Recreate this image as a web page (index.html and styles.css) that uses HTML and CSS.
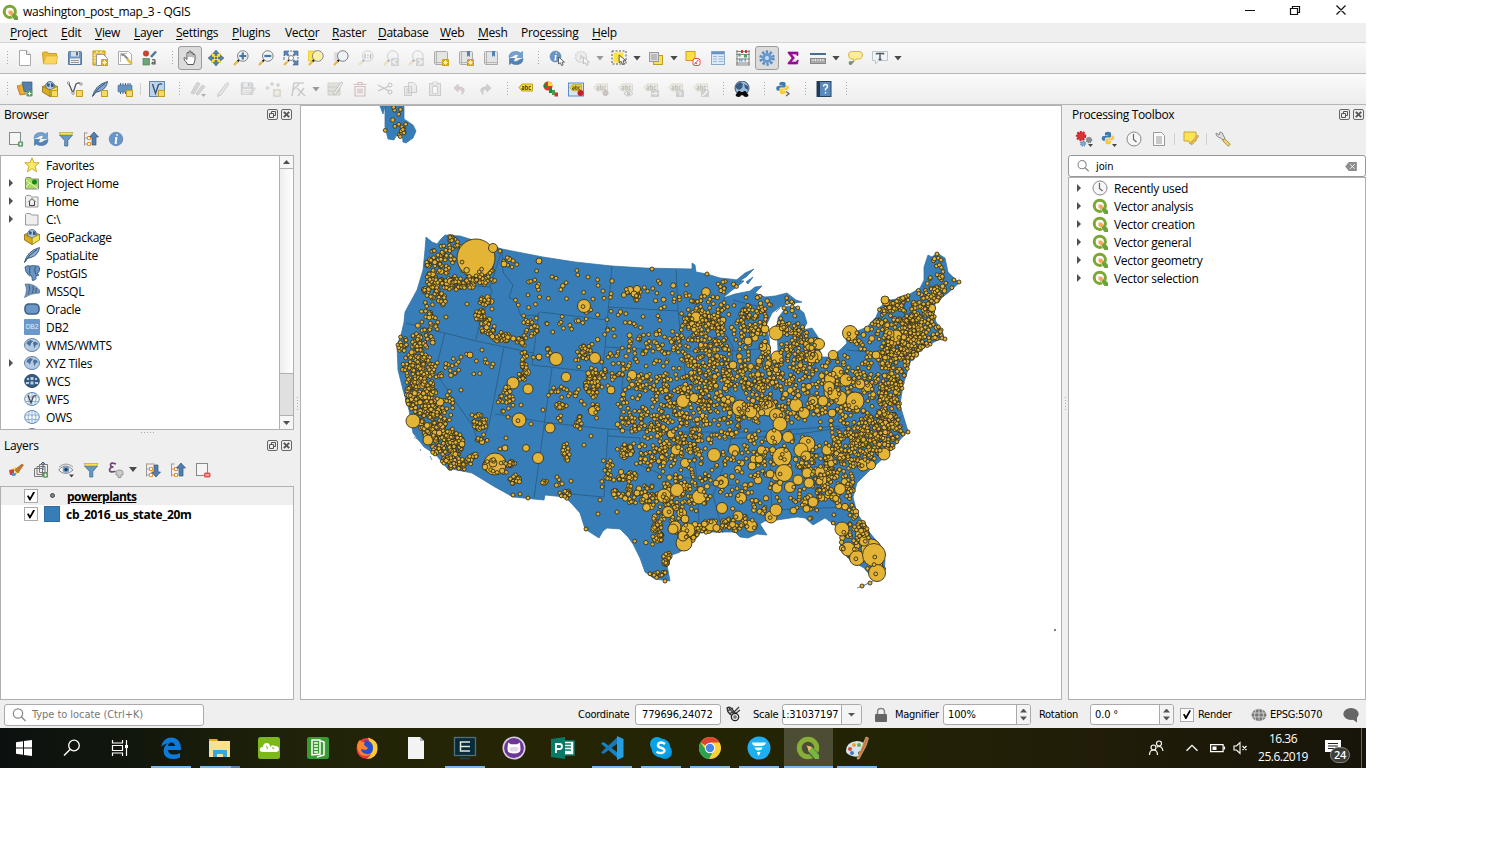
FILE: index.html
```html
<!DOCTYPE html>
<html lang="en">
<head>
<meta charset="utf-8">
<title>washington_post_map_3 - QGIS</title>
<link rel="stylesheet" href="styles.css">
</head>
<body>
<svg class="sprite" aria-hidden="true">
<symbol id="q" viewBox="0 0 16 16"><circle cx="7.8" cy="7.8" r="5.6" fill="none" stroke="#7aa832" stroke-width="3"/><path d="M8 8l6.500 6.500" stroke="#fff" stroke-width="4.500"/><path d="M10.500 9h2l3.500 3.800V16h-3.500L9.500 12z" fill="#6ba539"/><path d="M6.500 6.500h3l2.500 2.500-3 3-2.500-2.500z" fill="#f3a85c"/></symbol>
<symbol id="new" viewBox="0 0 16 16"><path d="M2.500.5h7l4 4v11h-11z" fill="#fff" stroke="#aaa"/><path d="M9.500.5v4h4" fill="#eee" stroke="#999"/></symbol>
<symbol id="open" viewBox="0 0 16 16"><path d="M.5 3l1-1h4l1 1.500h8v10H1.500z" fill="#e8b83a" stroke="#cf9e28"/><path d="M1.500 14L4 6h12l-2 8z" fill="#fbd65c" stroke="#dbab35" stroke-width=".6"/></symbol>
<symbol id="save" viewBox="0 0 16 16"><path d="M1.500 2.500q0-1 1-1h11q1 0 1 1v12h-13z" fill="#7197c2" stroke="#56789d"/><rect x="4" y="1.500" width="8" height="5" fill="#d8dde2"/><rect x="9" y="2" width="2" height="3.500" fill="#526b86"/><rect x="3" y="8.500" width="10" height="5.500" fill="#efefef"/><path d="M4 10.500h8M4 12.500h8" stroke="#999"/></symbol>
<symbol id="star" viewBox="0 0 8 8"><rect width="8" height="8" rx="1" fill="#cba516"/><path d="M4 1v6M1 4h6M2 2l4 4M6 2L2 6" stroke="#fff7a0"/></symbol>
<symbol id="layout" viewBox="0 0 16 16"><path d="M1 1h12v14H1z" fill="#f2c62e" stroke="#bd941c"/><path d="M4.500 4.500h7l4 4v7h-11z" fill="#fff" stroke="#999"/><path d="M1.500 5h2M1.500 8h2M1.500 11h2M5 1v2M9 1v2" stroke="#fff"/><use href="#star" x="9" y="9" width="7" height="7"/></symbol>
<symbol id="mgr" viewBox="0 0 16 16"><path d="M1.500 1.500h10l3 3v10h-13z" fill="#fff" stroke="#aaa"/><path d="M3.500 12V3.500H10" fill="none" stroke="#bbb"/><path d="M4.500 5.500q2-1.500 3.500.5t3 3" fill="none" stroke="#888" stroke-width="2"/><path d="M10 9l5 5" stroke="#e3bd3b" stroke-width="2.500"/></symbol>
<symbol id="style" viewBox="0 0 16 16"><circle cx="4" cy="3.500" r="3" fill="#c8442c"/><rect x="1" y="8.500" width="6.500" height="6.500" fill="#69a778" stroke="#44774f" stroke-width=".6"/><path d="M9 7l5-5.500" stroke="#4c76a5" stroke-width="2.500"/><path d="M10 10q3-1.200 3 1v3.500M13 12q-3 0-3 1.300t3 .2" stroke="#555" stroke-width="1.200" fill="none"/></symbol>
<symbol id="hand" viewBox="0 0 16 16"><path d="M5.500 14.500c0-2-3.500-4-3.500-6s2 0 3 1V3q1-1.500 2 0V1.500q1-1.500 2 0V3q1-1.500 2 0v1.500q1.500-1 2 .5v5l-1.500 4.500z" fill="#fff" stroke="#333" stroke-width=".8"/><path d="M7 3v4M9 2.500V7M11 3.500V7.500" stroke="#555" stroke-width=".8"/></symbol>
<symbol id="pan" viewBox="0 0 16 16"><path d="M3 3h10v10H3z" fill="#f6dc3a" opacity=".9"/><path d="M8 0l3 3.500H9v2H7v-2H5zM8 16l3-3.500H9v-2H7v2H5zM0 8l3.500-3v2h2v2h-2v2zM16 8l-3.500-3v2h-2v2h2v2z" fill="#5583b6" stroke="#305376" stroke-width=".5"/><circle cx="8" cy="8" r="1.200" fill="#476d97"/></symbol>
<symbol id="glass" viewBox="0 0 16 16"><circle cx="9.800" cy="6" r="5.300" fill="#eef3f7" stroke="#808080"/><path d="M6 10l-1.500 1.500" stroke="#222" stroke-width="2"/><path d="M4.500 11.500L1 15" stroke="#e3b940" stroke-width="2.300"/></symbol>
<symbol id="zin" viewBox="0 0 16 16"><use href="#glass"/><path d="M9.800 2.500v7M6.300 6h7" stroke="#4776ab" stroke-width="2.200"/></symbol>
<symbol id="zout" viewBox="0 0 16 16"><use href="#glass"/><path d="M6.300 6h7" stroke="#4776ab" stroke-width="2.200"/></symbol>
<symbol id="zfull" viewBox="0 0 16 16"><path d="M2 1h12v14H2z" fill="#f5f5f5"/><path d="M1 1h5L4.500 3 6 5 5 6 3 4.500 1 6zM15 1h-5l1.500 2L10 5l1 1 2-1.500L15 6zM15 15h-5l1.500-2L10 11l1-1 2 1.500 2-1.500z" fill="#5a87b8" stroke="#385b82" stroke-width=".6"/><path d="M7 1h2M1 7v3M15 7v2" stroke="#4776ab"/><circle cx="8" cy="8" r="2.500" fill="#fff" stroke="#888"/><path d="M6 10l-1 1" stroke="#222" stroke-width="2"/><path d="M4.500 11.500L1 15" stroke="#e3b940" stroke-width="2.300"/></symbol>
<symbol id="zsel" viewBox="0 0 16 16"><path d="M0 1h8v10H0z" fill="#f9e450" stroke="#d2b322" stroke-width=".6"/><use href="#glass"/><circle cx="9.800" cy="6" r="4.600" fill="#fbf1a5"/></symbol>
<symbol id="zlay" viewBox="0 0 16 16"><path d="M1 2h8v9H1z" fill="#ddd"/><use href="#glass"/></symbol>
<symbol id="z11" viewBox="0 0 16 16"><use href="#glass"/><path d="M7 4v4.500M12.500 4v4.500M9.800 4.800v1M9.800 7.200v1" stroke="#444" stroke-width="1.300"/></symbol>
<symbol id="zprev" viewBox="0 0 16 16"><use href="#glass"/><rect x="8" y="8" width="8" height="8" fill="#999"/><path d="M13.500 9.500L10 12l3.500 2.500" stroke="#fff" stroke-width="1.500" fill="none"/></symbol>
<symbol id="znext" viewBox="0 0 16 16"><use href="#glass"/><rect x="8" y="8" width="8" height="8" fill="#999"/><path d="M10.500 9.500L14 12l-3.500 2.500" stroke="#fff" stroke-width="1.500" fill="none"/></symbol>
<symbol id="book" viewBox="0 0 16 16"><path d="M1.500 2.500q0-1 1-1h11q1 0 1 1v12h-12l-1-1z" fill="#e4e4e4" stroke="#aaa"/><path d="M3.500 2v12M1.500 12.500h13" stroke="#b5b5b5"/></symbol>
<symbol id="map" viewBox="0 0 16 16"><use href="#book"/><use href="#star" x="9" y="9" width="7" height="7"/></symbol>
<symbol id="bkm" viewBox="0 0 16 16"><use href="#book"/><path d="M9 1h3v6l-1.500-1.500L9 7z" fill="#5280b3"/></symbol>
<symbol id="bkn" viewBox="0 0 16 16"><use href="#bkm"/><use href="#star" x="9" y="9" width="7" height="7"/></symbol>
<symbol id="ref" viewBox="0 0 16 16"><path d="M1 7.500Q1 1.500 8 1.500q3 0 4.500 1.500L14.500 1.500V7.500H9L11 5.200Q7.500 3 5 6z" fill="#72a1d2" stroke="#4f7dae" stroke-width=".6"/><path d="M15 8.500q0 6-7 6-3 0-4.500-1.500l-2 1.500V8.500H7L5 10.800Q8.500 13 11 10z" fill="#4f83ba" stroke="#3f6b9b" stroke-width=".6"/></symbol>
<symbol id="cur" viewBox="0 0 8 9"><path d="M1 0v7l1.800-1.300L4 8.500 5.500 8 4.500 5.200H7z" fill="#fff" stroke="#444" stroke-width=".8"/></symbol>
<symbol id="info" viewBox="0 0 16 16"><circle cx="8" cy="8" r="6.800" fill="#6795c7" stroke="#4f79a6" stroke-width=".6"/><path d="M8.300 3.800h1.400M7 7h1.500L7.500 12H9" fill="none" stroke="#fff" stroke-width="1.700"/></symbol>
<symbol id="ident" viewBox="0 0 16 16"><use href="#info" width="13" height="13"/><use href="#cur" x="8.500" y="7" width="8" height="9"/></symbol>
<symbol id="act" viewBox="0 0 16 16"><circle cx="7" cy="7" r="5.500" fill="#ddd" stroke="#999" stroke-width="1.600" stroke-dasharray="2 1"/><path d="M6 4.500L10 7l-4 2.500z" fill="#888"/><use href="#cur" x="8.500" y="7" width="8" height="9"/></symbol>
<symbol id="sel" viewBox="0 0 16 16"><rect x="2.500" y="2.500" width="10" height="10" fill="#f9e443"/><rect x="1" y="1" width="14" height="13" fill="none" stroke="#555" stroke-dasharray="2 1.500"/><use href="#cur" x="7" y="5" width="9" height="10"/></symbol>
<symbol id="selform" viewBox="0 0 16 16"><rect x="5.500" y="5.500" width="9" height="9" fill="#f9e443" stroke="#bd9d27"/><rect x="1.500" y="2.500" width="9" height="9" fill="#ddd" stroke="#999"/><path d="M3 5h6M3 7h6M3 9h6" stroke="#999"/></symbol>
<symbol id="desel" viewBox="0 0 16 16"><rect x="1" y="1.500" width="9" height="9" fill="#fbe13d" stroke="#d19927"/><rect x="8" y="8.500" width="7" height="7" rx="2" fill="#fff" stroke="#dc4a4a"/><path d="M9 14.500l5-5M10 12.500l2 1.500" stroke="#dc3a3a"/></symbol>
<symbol id="table" viewBox="0 0 16 16"><rect x="1.500" y="1.500" width="13" height="13" fill="#dfeaf5" stroke="#86a9cd"/><path d="M2 3h12" stroke="#6894c2" stroke-width="2.500"/><path d="M3 6.500h4M8.500 6.500h5M3 9h4M8.500 9h5M3 11.500h4M8.500 11.500h5" stroke="#9ab9d9"/></symbol>
<symbol id="abac" viewBox="0 0 16 16"><path d="M2 0v15M14 0v15M1 15h14M1 4.500h14M1 9h14M1 13h14M1 1.500h14" stroke="#888" stroke-width="1.100"/><path d="M6 1.500h2M10 1.500h2" stroke="#cf3434" stroke-width="3"/><path d="M3.500 5h2M9 6h3" stroke="#45a566" stroke-width="3"/><path d="M4 10h4M9.500 10h2" stroke="#6e9ac7" stroke-width="3" stroke-dasharray="1.500 .6"/></symbol>
<symbol id="gear" viewBox="0 0 16 16"><circle cx="8" cy="8" r="6.200" fill="none" stroke="#5a8bc2" stroke-width="3" stroke-dasharray="2.300 1.600"/><circle cx="8" cy="8" r="5" fill="#6798ce"/><circle cx="8" cy="8" r="2" fill="#c8dcf1"/></symbol>
<symbol id="sigma" viewBox="0 0 16 16"><path d="M3 2h10v3.500h-1L11 4H6.500l3 4-3.500 4h5l1.500-2h.8L12.500 14H3v-1l4-5-4-5z" fill="#970c97" stroke="#970c97" stroke-width=".7"/></symbol>
<symbol id="ruler" viewBox="0 0 16 16"><path d="M0 4h16" stroke="#4a6d93" stroke-width="2"/><rect x=".5" y="8.500" width="15" height="5" fill="#aaa" stroke="#888"/><path d="M3 9v2M5.500 9v2M8 9v2M10.500 9v2M13 9v2" stroke="#eee"/></symbol>
<symbol id="tip" viewBox="0 0 16 16"><path d="M4 1.500h9q2.500.5 2.500 3.500t-2.500 4H9L6.500 12V9H4Q1.500 8 1.500 5T4 1.500z" fill="#fbed91" stroke="#d6bb41"/><path d="M3.500 13.500l3-2" stroke="#888" stroke-width="2"/><circle cx="3.500" cy="13" r="1.900" fill="#6c9a60"/></symbol>
<symbol id="anno" viewBox="0 0 16 16"><path d="M.5 1.500h15v9H7L3.500 14v-3.500h-3z" fill="#eef4f9" stroke="#bbc5cd"/><path d="M4.500 3v1.500M4.500 3.500h7V4.500M8 3.500v6M6.500 9.500h3" fill="none" stroke="#555" stroke-width="1.400"/></symbol>
<symbol id="plus" viewBox="0 0 8 8"><rect x=".5" y=".5" width="7" height="7" rx="1.500" fill="#5d9a66"/><path d="M4 2v4M2 4h4" stroke="#fff" stroke-width="1.200"/></symbol>
<symbol id="yb" viewBox="0 0 8 8"><rect x=".5" y=".5" width="7" height="7" rx="1" fill="#f5db61" stroke="#c69c1d" stroke-width="1.300"/></symbol>
<symbol id="dsm" viewBox="0 0 16 16"><path d="M0 5l5-1 4 9-6 1z" fill="#f0a22e" stroke="#99591b" stroke-width=".6"/><path d="M3 3l7-1 2 9-7 1z" fill="#e3bb38"/><path d="M5 1h10v9.500H7z" fill="#557fac" stroke="#385d84" stroke-width=".7"/><use href="#plus" x="9" y="9" width="7" height="7"/></symbol>
<symbol id="box" viewBox="0 0 16 16"><path d="M.5 5.500L8 2l7.500 3.500v5.500L8 15.500.5 11z" fill="#dbac1e" stroke="#7b621b" stroke-width=".6"/><circle cx="8" cy="4.800" r="4.300" fill="#a9c5e0" stroke="#3b6088" stroke-width=".8"/><path d="M5 2l3 1-1 3-2-1zM9 2l2.500 1v3H9z" fill="#36597f"/><path d="M8 9l7.500-3.500V11L8 15.500z" fill="#f3e250" stroke="#7b621b" stroke-width=".5"/><path d="M8 9L.5 5.500V11L8 15.500z" fill="#dbac1e" stroke="#7b621b" stroke-width=".5"/></symbol>
<symbol id="gpk" viewBox="0 0 16 16"><use href="#box"/><use href="#yb" x="9" y="9" width="7" height="7"/></symbol>
<symbol id="vec" viewBox="0 0 16 16"><path d="M1.500 2L6 12 9 3q3-2 4-.5" fill="none" stroke="#4b5158" stroke-width="1.200"/><circle cx="1.500" cy="2" r="1.200" fill="#fff" stroke="#555" stroke-width=".6"/><circle cx="6" cy="12" r="1.300" fill="#fff" stroke="#555" stroke-width=".6"/><circle cx="14" cy="3" r="1.200" fill="#fff" stroke="#555" stroke-width=".6"/></symbol>
<symbol id="shp" viewBox="0 0 16 16"><use href="#vec"/><use href="#yb" x="9" y="9" width="7" height="7"/></symbol>
<symbol id="feather" viewBox="0 0 16 16"><path d="M.5 15.500Q3 4 15.500.5 14.500 8 7 10.500l-4 1z" fill="#85a9cf" stroke="#365578" stroke-width=".9"/><path d="M1 15Q5 7 13 2.500" stroke="#365578" fill="none"/></symbol>
<symbol id="spl" viewBox="0 0 16 16"><use href="#feather"/><use href="#yb" x="9" y="9" width="7" height="7"/></symbol>
<symbol id="mem" viewBox="0 0 16 16"><path d="M3.500 2v11M6 2v11M8.500 2v11M11 2v11M13 2v11" stroke="#456b93"/><rect x="1" y="4" width="14" height="7" rx="1" fill="#6692c0" stroke="#456b93" stroke-width=".6"/><use href="#yb" x="9" y="9" width="7" height="7"/></symbol>
<symbol id="virt" viewBox="0 0 16 16"><rect x=".5" y=".5" width="15" height="15" fill="#bdd3e9" stroke="#6488ad"/><path d="M3.500 3l3 9.500 3-9q3-1 3.500 0" fill="none" stroke="#34516f" stroke-width="1.300"/><use href="#yb" x="9" y="9" width="7" height="7"/></symbol>
<symbol id="pen" viewBox="0 0 16 16"><path d="M3 13L12 1.500l2 1.500L6 14l-3.500 1.500z" fill="#ccc" stroke="#777"/></symbol>
<symbol id="pens" viewBox="0 0 16 16"><path d="M1 12L7 1.500l3 1L4 13zM6 13l6-9 3 1.500-7 8.500z" fill="#999" stroke="#777"/><path d="M11 13h5l-2.500 3z" fill="#222"/></symbol>
<symbol id="savee" viewBox="0 0 16 16"><use href="#save" width="14" height="15"/><path d="M9 13l5-7 2 1-5 7z" fill="#999"/></symbol>
<symbol id="pts" viewBox="0 0 16 16"><g fill="#bbb" stroke="#777"><circle cx="2.500" cy="7" r="1.300"/><circle cx="7" cy="3" r="1.300"/><circle cx="13" cy="4" r="1.300"/></g><use href="#star" x="8" y="8" width="8" height="8"/></symbol>
<symbol id="vert" viewBox="0 0 16 16"><path d="M2 15L4 2h10M3 9L9 3M7 7l8 8M14 7l-6 8" stroke="#777" fill="none" stroke-width="1.500"/></symbol>
<symbol id="multi" viewBox="0 0 16 16"><path d="M1 2h12v12H1z" fill="#bba" stroke="#887"/><path d="M1 6h12M1 10h12" stroke="#776"/><path d="M6 13l8-12 2 1-8 12z" fill="#eee" stroke="#555"/></symbol>
<symbol id="trash" viewBox="0 0 16 16"><path d="M3 5.500h10v9.500H3zM1.500 3.500h13M6 3V1.500h4V3M6 7.500v5M8 7.500v5M10 7.500v5" fill="none" stroke="#964c4c" stroke-width="1.200"/></symbol>
<symbol id="cut" viewBox="0 0 16 16"><path d="M1 4l11 6M1 10l11-5" stroke="#666" stroke-width="1.300"/><circle cx="13" cy="4" r="2" fill="none" stroke="#555"/><circle cx="13" cy="11" r="2" fill="none" stroke="#555"/></symbol>
<symbol id="copy" viewBox="0 0 16 16"><path d="M6.500 1.500h5l3 3v7h-8zM2.500 5.500h7v9h-7zM4 8h4M4 10h4M4 12h4" fill="#ddd" stroke="#777"/></symbol>
<symbol id="paste" viewBox="0 0 16 16"><path d="M2.500 2.500h11v12h-11z" fill="#ccc" stroke="#777"/><path d="M5.500 5.500h5v7h-5zM6 1h4v3H6z" fill="#fff" stroke="#888"/></symbol>
<symbol id="undo" viewBox="0 0 16 16"><path d="M6 3L2 7l4 4V8.500q5-1 4 5 6-7-4-8z" fill="#a77" stroke="#877"/></symbol>
<symbol id="redo" viewBox="0 0 16 16"><path d="M10 3l4 4-4 4V8.500q-5-1-4 5-6-7 4-8z" fill="#888" stroke="#777"/></symbol>
<symbol id="abc" viewBox="0 0 16 16"><path d="M1 6.500L4 3h10.500v7H4z" fill="#f7de31" stroke="#c4a31a"/><path d="M4 5.500h2v3H4V7h2M7.600 4v4.500h1.800v-3H7.600M13 5.500h-2v3h2" fill="none" stroke="#4a4526" stroke-width=".9"/></symbol>
<symbol id="diag" viewBox="0 0 16 16"><circle cx="5" cy="5" r="4.500" fill="#e4342e"/><path d="M5 5V.500A4.500 4.500 0 0 1 9.500 5z" fill="#ffdc37"/><path d="M5 5L1 7A4.500 4.500 0 0 1 1 3z" fill="#198d36"/><path d="M6 6h3v6H6z" fill="#198d36"/><path d="M9 9h3v5H9z" fill="#35a74c"/><path d="M11.500 11.500h3.500V15.500h-3.500z" fill="#d62e28"/></symbol>
<symbol id="abcs" viewBox="0 0 16 16"><rect x=".5" y="2" width="15" height="13" fill="#d6e6f5" stroke="#5990cc"/><use href="#abc" x="1" y="1" width="14" height="14"/><circle cx="12.500" cy="12" r="3" fill="#c42325"/></symbol>
<symbol id="abcp" viewBox="0 0 16 16"><use href="#abc"/><circle cx="12.500" cy="12" r="3" fill="#a55"/></symbol>
<symbol id="abce" viewBox="0 0 16 16"><use href="#abc"/><path d="M6 12.500q4.500-5 9 0-4.500 5-9 0z" fill="#ddd" stroke="#666"/><circle cx="10.500" cy="12.500" r="1.500" fill="#555"/></symbol>
<symbol id="abcm" viewBox="0 0 16 16"><use href="#abc"/><rect x="8" y="9" width="8" height="7" fill="#888"/><path d="M9 12.500h5M12 10.500l2 2-2 2" fill="none" stroke="#fff"/></symbol>
<symbol id="abcr" viewBox="0 0 16 16"><use href="#abc"/><rect x="8" y="9" width="8" height="7" fill="#888"/><path d="M10 11q4-1 3 3M13 14l-2-1" fill="none" stroke="#fff"/></symbol>
<symbol id="abct" viewBox="0 0 16 16"><use href="#abc"/><rect x="8" y="9" width="8" height="7" fill="#888"/><path d="M9.500 15l5-5" stroke="#fff" stroke-width="1.500"/></symbol>
<symbol id="globe" viewBox="0 0 16 16"><ellipse cx="8" cy="8" rx="7.500" ry="6.500" fill="#b5cbe2" stroke="#5e82a9"/><path d="M3 5l3-2 3 1-2 2.500-1 3-2-2-1.500-.5zM10 4.500l2.500.5 1.500 2-2.500 1.500-1 3-1-3.500-.5-2z" fill="#4a729c"/></symbol>
<symbol id="meta" viewBox="0 0 16 16"><circle cx="8" cy="7" r="7" fill="#9bbad9" stroke="#385577"/><path d="M2 4l4-3 3 2-1 4-3 2-3-2zM10 3l4 2v4l-3-2z" fill="#385b80"/><path d="M4.500 10h2v1h3v-1h2l3 4q0 2-2.500 2T9 14H7q0 2-2.500 2T1.500 14z" fill="#0a0a0a"/></symbol>
<symbol id="py" viewBox="0 0 16 16"><path d="M8 .8q-3.500 0-3.500 2V5H8v.8H2.500Q.8 6 .8 8.500T3 11h1.500V9q0-1.500 2-1.500h3.500q1.500 0 1.500-1.500V3Q11.500.8 8 .8z" fill="#3f7ab1"/><path d="M8 15.200q3.500 0 3.500-2V11H8v-.8h5.500q1.700-.2 1.700-2.700T13 5h-1v2q0 1.500-2 1.500H6.500Q5 8.500 5 10v3q0 2.200 3 2.200z" fill="#f9cb35"/></symbol>
<symbol id="pyc" viewBox="0 0 16 16"><use href="#py" width="15" height="14"/><path d="M11 10.500l3 2.200-3 2.300" stroke="#666" fill="none" stroke-width="1.300"/></symbol>
<symbol id="help" viewBox="0 0 16 16"><rect x="1" y=".5" width="14" height="15" fill="#5a8abd" stroke="#25425f"/><path d="M1 .5h3v15H1z" fill="#223950"/><path d="M7.500 5.500q0-2 2-2t2 2q0 1-2 2.500V9.500M9.500 11v1.500" stroke="#fff" fill="none" stroke-width="1.400"/></symbol>
<symbol id="addl" viewBox="0 0 16 16"><rect x="1.500" y="1.500" width="11" height="12" fill="#f5f5f5" stroke="#888"/><use href="#plus" x="9.500" y="10" width="6" height="6"/></symbol>
<symbol id="filt" viewBox="0 0 16 16"><path d="M1.500 4h13L9.800 9.500V15H6.700V9.500z" fill="#6798ca" stroke="#42698f" stroke-width=".8"/><path d="M1 1.500h14L13.500 4h-11z" fill="#f8e445" stroke="#a89b3a" stroke-width=".6"/></symbol>
<symbol id="coll" viewBox="0 0 16 16"><path d="M1.500 1.500v13M1.500 2h3M1.500 7h3M1.500 13h3" stroke="#999" fill="none"/><path d="M4.500 5.500h3v3h-3zM4.500 11.500h3v3h-3z" fill="#fff" stroke="#ef9024"/><path d="M11 1l4.500 5H13v8H9V6H6.500z" fill="#527fae" stroke="#34577b" stroke-width=".7"/></symbol>
<symbol id="expd" viewBox="0 0 16 16"><path d="M1.500 1.500v13M1.500 2h8M1.500 7h3M1.500 13h3" stroke="#999" fill="none"/><path d="M4.500 5.500h3v3h-3zM4.500 11.500h3v3h-3z" fill="#fff" stroke="#ef9024"/><path d="M11 15L6.500 10H9V3h4v7h2.500z" fill="#527fae" stroke="#34577b" stroke-width=".7"/></symbol>
<symbol id="fav" viewBox="0 0 16 16"><path d="M8 .8l2 5h5.300l-4.200 3.400 1.500 5.600L8 11.600l-4.600 3.200 1.500-5.600L.7 5.800H6z" fill="#fcec64" stroke="#cda82e"/></symbol>
<symbol id="ph" viewBox="0 0 16 16"><path d="M1.500 3.500l1-1h4l1 1.500h7v10h-13z" fill="#a9d95d" stroke="#888"/><path d="M2 5l4 3 3 2 5 4M2 12l4-4" stroke="#e6f6c5" fill="none"/><circle cx="10.500" cy="7" r="2.500" fill="#128b16"/></symbol>
<symbol id="fold" viewBox="0 0 16 16"><path d="M1.500 3.500l1-1h4l1 1.500h6.500v10h-12.500z" fill="#eee" stroke="#999"/></symbol>
<symbol id="home" viewBox="0 0 16 16"><use href="#fold"/><path d="M4.500 9L8 5.500 11.500 9M5.500 8.500v4h5v-4" fill="none" stroke="#444"/></symbol>
<symbol id="pg" viewBox="0 0 16 16"><path d="M1 2q2-2 5-1 4-1 6 0 4-1 3.500 4-.5 3-2.500 4l2 1q-2 1-3 .500v3q-1 2-3.500 2l-1-5q-2 1-3-.5Q1 7 1 2z" fill="#6a94c1" stroke="#395b80" stroke-width=".9"/><path d="M6 1.500q-1 4 0 8M11.500 1.500q-2 3 .5 8" fill="none" stroke="#34577b"/></symbol>
<symbol id="ms" viewBox="0 0 16 16"><path d="M1 1q9-1 14.500 6v3Q7 10 .5 14.500 4 7 1 1z" fill="#7195bd" stroke="#4e6d90" stroke-width=".7"/><path d="M5 1.500q2 5-1 10M9 3q1 4-1 7.500M12 5q.7 3-.5 5" stroke="#3b5979" fill="none"/></symbol>
<symbol id="ora" viewBox="0 0 16 16"><rect x="1" y="3" width="14" height="10" rx="4" fill="#6b98c8" stroke="#3f5e80" stroke-width="1.600"/></symbol>
<symbol id="wire" viewBox="0 0 16 16"><ellipse cx="8" cy="8" rx="7.300" ry="6.500" fill="#f1f6fb" stroke="#5d88b6"/><path d="M1 6h14M1 10.500h14M8 1.500v13M5.500 2q-3 6 0 12M10.500 2q3 6 0 12" fill="none" stroke="#7fa5cd" stroke-width=".8"/></symbol>
<symbol id="wcs" viewBox="0 0 16 16"><ellipse cx="8" cy="8" rx="7.300" ry="6.500" fill="#37597d" stroke="#2c4b6b"/><path d="M3 5h2v2H3zM6.500 4h3v3h-3zM11 5h2v2h-2zM2 9h3v2H2zM6.500 8.500h3v3h-3zM11 9h3v2h-3z" fill="#b6cee6"/></symbol>
<symbol id="wfs" viewBox="0 0 16 16"><use href="#wire"/><path d="M4 4l3 8 2.500-7 3-.5" fill="none" stroke="#444" stroke-width="1.200"/></symbol>
<symbol id="brush" viewBox="0 0 16 16"><path d="M1 8l5-1v6H2z" fill="#cf4141"/><path d="M4 11h5l-2 3H4z" fill="#5d91cb"/><path d="M5 6l3-1 4 5-4 2z" fill="#f2cf45"/><path d="M7 8l2-2 5-4 1.500 1L12 8l-2 3z" fill="#c9762c" stroke="#8d5120" stroke-width=".5"/></symbol>
<symbol id="grp" viewBox="0 0 16 16"><path d="M1.500 6.500h8v8h-8zM4 4.500h8v8H4zM6.500 2.500h8v8h-8z" fill="none" stroke="#777"/><path d="M8 2l2-2 2 2M10 0v8" stroke="#355b83" fill="none"/><use href="#plus" x="9.500" y="10" width="6" height="6"/></symbol>
<symbol id="eye" viewBox="0 0 16 16"><path d="M.5 8q7-8 14.500 0-7.500 7-14.500 0z" fill="#f3f5f7" stroke="#888"/><path d="M1 5Q8-1 15 5" stroke="#999" fill="none"/><circle cx="8" cy="7.500" r="3.300" fill="#6d9acb"/><circle cx="8" cy="7.500" r="1.600" fill="#173553"/><path d="M11 12.500h5l-2.500 3z" fill="#444"/></symbol>
<symbol id="eps" viewBox="0 0 16 16"><path d="M8 2Q2.500-.2 2.500 3q0 2 3 2Q1.500 5.300 1.500 8q.5 3.200 6 1.200" stroke="#714878" stroke-width="1.700" fill="none"/><path d="M8 10q0-2 3.500-2t3.500 2v3h-2v2.500h-3V13H8z" fill="#ccc" stroke="#888" stroke-width=".8"/></symbol>
<symbol id="rem" viewBox="0 0 16 16"><rect x="1.500" y="1.500" width="11" height="12" fill="#f5f5f5" stroke="#888"/><rect x="9" y="10.500" width="6.500" height="5" rx="1.500" fill="#e25050"/><path d="M10.500 13h3.500" stroke="#fff"/></symbol>
<symbol id="gears" viewBox="0 0 18 16"><circle cx="6" cy="5" r="4" fill="#d93438" stroke="#ce2529" stroke-width="2.500" stroke-dasharray="1.700 1.200"/><circle cx="14" cy="9" r="2.500" fill="#8b9097" stroke="#777" stroke-width="1.500" stroke-dasharray="1 1"/><circle cx="8" cy="12.500" r="2.500" fill="#7ba5d2" stroke="#7397c0" stroke-width="1.500" stroke-dasharray="1 1"/><path d="M13 13h5l-2.500 3z" fill="#444"/></symbol>
<symbol id="pyd" viewBox="0 0 16 16"><use href="#py" width="14" height="14"/><path d="M11 13h5l-2.500 3z" fill="#444"/></symbol>
<symbol id="clock" viewBox="0 0 16 16"><circle cx="8" cy="8" r="7" fill="#f7f7f7" stroke="#888"/><path d="M7.500 3v5.500l3 2.500" fill="none" stroke="#666" stroke-width="1.200"/></symbol>
<symbol id="doc" viewBox="0 0 16 16"><path d="M2.500 1.500h8l3 3v10h-11z" fill="#fafafa" stroke="#999"/><path d="M5 6h6M5 8h6M5 10h6M5 12h6" stroke="#999"/></symbol>
<symbol id="note" viewBox="0 0 16 16"><path d="M1 1h12v9H9l-2 3-1-3H1z" fill="#fbe554" stroke="#cfa42c"/><path d="M8 12l6-8 2 1-6 8-2 1z" fill="#f0b53a" stroke="#999" stroke-width=".5"/></symbol>
<symbol id="wr" viewBox="0 0 16 16"><path d="M1 2l3 2 1-3q3 0 3.500 4L10 7 8 9 5.500 7Q1 6 1 2z" fill="#ddd" stroke="#888"/><path d="M8.500 8.500l6 6" stroke="#aa8b39" stroke-width="3.500"/><path d="M9 9l5 5" stroke="#f1d875" stroke-width="2"/></symbol>
<symbol id="mag" viewBox="0 0 16 16"><circle cx="7" cy="6.500" r="4.700" fill="none" stroke="#888" stroke-width="1.200"/><path d="M10.500 10l4 4" stroke="#888" stroke-width="1.500"/></symbol>
<symbol id="flt" viewBox="0 0 11 11"><rect x=".5" y=".5" width="10" height="10" rx="1.500" fill="none" stroke="#666"/><path d="M4.500 4.500v-2h4v4h-2M2.500 4.500h4v4h-4z" fill="none" stroke="#555"/></symbol>
<symbol id="cls" viewBox="0 0 11 11"><rect x=".5" y=".5" width="10" height="10" rx="1.500" fill="none" stroke="#666"/><path d="M2.800 2.800l5.400 5.400M8.200 2.800L2.800 8.200" stroke="#555" stroke-width="1.900"/></symbol>
<symbol id="trk" viewBox="0 0 16 16"><path d="M2 2q3-2 5 1l4 5-3 3-5-5z" fill="#ccc" stroke="#222" stroke-width="1.200"/><path d="M2 5l6-3M4 8l6-3M4 2l6 7M9 6l5-5M10 8l5-4" stroke="#333" stroke-width="1.100"/><circle cx="10" cy="11" r="3.700" fill="#ddd" stroke="#222" stroke-width="1.200"/><path d="M8 11h4M10 9v4" stroke="#555"/></symbol>
<symbol id="lock" viewBox="0 0 14 16"><path d="M3.500 8V5q0-3.500 3.500-3.500T10.500 5v3" fill="none" stroke="#888" stroke-width="1.500"/><rect x="1" y="7" width="12" height="8" rx="1" fill="#656565"/></symbol>
<symbol id="crs" viewBox="0 0 16 16"><ellipse cx="8" cy="8" rx="7.500" ry="6" fill="#777"/><path d="M1 6h14M1 10h14M8 1v14M5 2q-3 6 0 12M11 2q3 6 0 12" fill="none" stroke="#ddd" stroke-width=".8"/></symbol>
<symbol id="bub" viewBox="0 0 16 16"><ellipse cx="8" cy="7" rx="7.700" ry="6" fill="#666"/><path d="M9 12l5 3.500V10z" fill="#666"/></symbol>
</svg>

<div class="app">
  <header class="title"><svg class="i"><use href="#q"/></svg><span>washington_post_map_3 - QGIS</span>
    <svg class="winctl" viewBox="0 0 130 23"><path d="M15 10.500h10M60.500 8.500h7v6h-7zM62.500 8V6.500h7v6h-2M106.500 5.500l9 9M115.500 5.500l-9 9" fill="none" stroke="#111" stroke-width="1.200"/></svg></header>
  <nav class="menu"><span><u>P</u>roject</span><span><u>E</u>dit</span><span><u>V</u>iew</span><span><u>L</u>ayer</span><span><u>S</u>ettings</span><span><u>P</u>lugins</span><span>Vect<u>o</u>r</span><span><u>R</u>aster</span><span><u>D</u>atabase</span><span><u>W</u>eb</span><span><u>M</u>esh</span><span>Pro<u>c</u>essing</span><span><u>H</u>elp</span></nav>
  <div class="bar"><i class="h first"></i><b><svg><use href="#new"/></svg></b><b><svg><use href="#open"/></svg></b><b><svg><use href="#save"/></svg></b><b><svg><use href="#layout"/></svg></b><b><svg><use href="#mgr"/></svg></b><b><svg><use href="#style"/></svg></b><i class="h"></i><b class="on"><svg><use href="#hand"/></svg></b><b><svg><use href="#pan"/></svg></b><b><svg><use href="#zin"/></svg></b><b><svg><use href="#zout"/></svg></b><b><svg><use href="#zfull"/></svg></b><b><svg><use href="#zsel"/></svg></b><b><svg><use href="#zlay"/></svg></b><b class="off"><svg><use href="#z11"/></svg></b><b class="off"><svg><use href="#zprev"/></svg></b><b class="off"><svg><use href="#znext"/></svg></b><b><svg><use href="#map"/></svg></b><b><svg><use href="#bkn"/></svg></b><b><svg><use href="#bkm"/></svg></b><b><svg><use href="#ref"/></svg></b><i class="h"></i><b><svg><use href="#ident"/></svg></b><b class="off"><svg><use href="#act"/></svg></b><i class="dd dim"></i><b><svg><use href="#sel"/></svg></b><i class="dd"></i><b><svg><use href="#selform"/></svg></b><i class="dd"></i><b><svg><use href="#desel"/></svg></b><b><svg><use href="#table"/></svg></b><b><svg><use href="#abac"/></svg></b><b class="on"><svg><use href="#gear"/></svg></b><b><svg><use href="#sigma"/></svg></b><b><svg><use href="#ruler"/></svg></b><i class="dd"></i><b><svg><use href="#tip"/></svg></b><b><svg><use href="#anno"/></svg></b><i class="dd"></i></div>
  <div class="bar"><i class="h first"></i><b><svg><use href="#dsm"/></svg></b><b><svg><use href="#gpk"/></svg></b><b><svg><use href="#shp"/></svg></b><b><svg><use href="#spl"/></svg></b><b><svg><use href="#mem"/></svg></b><i class="sep"></i><b><svg><use href="#virt"/></svg></b><i class="h"></i><b class="off"><svg><use href="#pens"/></svg></b><b class="off"><svg><use href="#pen"/></svg></b><b class="off gray"><svg><use href="#savee"/></svg></b><b class="off gray"><svg><use href="#pts"/></svg></b><b class="off"><svg><use href="#vert"/></svg></b><i class="dd dim"></i><b class="off"><svg><use href="#multi"/></svg></b><b class="off"><svg><use href="#trash"/></svg></b><b class="off"><svg><use href="#cut"/></svg></b><b class="off"><svg><use href="#copy"/></svg></b><b class="off"><svg><use href="#paste"/></svg></b><b class="off"><svg><use href="#undo"/></svg></b><b class="off"><svg><use href="#redo"/></svg></b><i class="h"></i><b><svg><use href="#abc"/></svg></b><b><svg><use href="#diag"/></svg></b><b><svg><use href="#abcs"/></svg></b><b class="off gray"><svg><use href="#abcp"/></svg></b><b class="off gray"><svg><use href="#abce"/></svg></b><b class="off gray"><svg><use href="#abcm"/></svg></b><b class="off gray"><svg><use href="#abcr"/></svg></b><b class="off gray"><svg><use href="#abct"/></svg></b><i class="h"></i><b><svg><use href="#meta"/></svg></b><i class="h"></i><b><svg><use href="#pyc"/></svg></b><i class="h"></i><b><svg><use href="#help"/></svg></b><i class="h"></i></div>

  <main class="work">
    <aside class="dock left">
      <div class="head"><span>Browser</span><svg class="hb"><use href="#flt"/></svg><svg class="hb"><use href="#cls"/></svg></div>
      <div class="tools"><b><svg><use href="#addl"/></svg></b><b><svg><use href="#ref"/></svg></b><b><svg><use href="#filt"/></svg></b><b><svg><use href="#coll"/></svg></b><b><svg><use href="#info"/></svg></b></div>
      <div class="tree browser">
        <ul>
          <li><svg><use href="#fav"/></svg>Favorites</li>
          <li class="x"><svg><use href="#ph"/></svg>Project Home</li>
          <li class="x"><svg><use href="#home"/></svg>Home</li>
          <li class="x"><svg><use href="#fold"/></svg>C:\</li>
          <li><svg><use href="#box"/></svg>GeoPackage</li>
          <li><svg><use href="#feather"/></svg>SpatiaLite</li>
          <li><svg><use href="#pg"/></svg>PostGIS</li>
          <li><svg><use href="#ms"/></svg>MSSQL</li>
          <li><svg><use href="#ora"/></svg>Oracle</li>
          <li><i class="db2">DB2</i>DB2</li>
          <li><svg><use href="#globe"/></svg>WMS/WMTS</li>
          <li class="x"><svg><use href="#globe"/></svg>XYZ Tiles</li>
          <li><svg><use href="#wcs"/></svg>WCS</li>
          <li><svg><use href="#wfs"/></svg>WFS</li>
          <li><svg><use href="#wire"/></svg>OWS</li>
          <li><svg><use href="#globe"/></svg></li>
        </ul>
        <div class="scroll"><i class="up"></i><i class="track"></i><i class="rest"></i><i class="down"></i></div>
      </div>
      <div class="split"></div>
      <div class="head lay"><span>Layers</span><svg class="hb"><use href="#flt"/></svg><svg class="hb"><use href="#cls"/></svg></div>
      <div class="tools laytools"><b><svg><use href="#brush"/></svg></b><b><svg><use href="#grp"/></svg></b><b><svg><use href="#eye"/></svg></b><b><svg><use href="#filt"/></svg></b><b><svg><use href="#eps"/></svg></b><i class="dd"></i><b><svg><use href="#expd"/></svg></b><b><svg><use href="#coll"/></svg></b><b><svg><use href="#rem"/></svg></b></div>
      <div class="tree layers">
        <div class="layer alt"><i class="ck"></i><i class="pt"></i><u>powerplants</u></div>
        <div class="layer wide"><i class="ck"></i><i class="sw"></i><span>cb_2016_us_state_20m</span></div>
      </div>
    </aside>
    <div class="vsplit"></div>
    <section class="canvas"><svg id="map-view" viewBox="301 106 760 593"></svg></section>
    <div class="vsplit"></div>
    <aside class="dock right">
      <div class="head"><span>Processing Toolbox</span><svg class="hb"><use href="#flt"/></svg><svg class="hb"><use href="#cls"/></svg></div>
      <div class="tools"><b><svg class="w18"><use href="#gears"/></svg></b><b><svg><use href="#pyd"/></svg></b><b><svg><use href="#clock"/></svg></b><b><svg><use href="#doc"/></svg></b><i class="sep"></i><b><svg><use href="#note"/></svg></b><i class="sep"></i><b><svg><use href="#wr"/></svg></b></div>
      <div class="search"><svg><use href="#mag"/></svg><span>join</span><svg class="clr" viewBox="0 0 14 10"><path d="M0 5l4-5h9v10H4z" fill="#8d8d8d"/><path d="M5.500 2.500l5 5M10.500 2.500l-5 5" stroke="#fff"/></svg></div>
      <div class="tree toolbox"><ul>
        <li class="x"><svg><use href="#clock"/></svg>Recently used</li>
        <li class="x"><svg><use href="#q"/></svg>Vector analysis</li>
        <li class="x"><svg><use href="#q"/></svg>Vector creation</li>
        <li class="x"><svg><use href="#q"/></svg>Vector general</li>
        <li class="x"><svg><use href="#q"/></svg>Vector geometry</li>
        <li class="x"><svg><use href="#q"/></svg>Vector selection</li>
      </ul></div>
    </aside>
  </main>

  <footer class="status">
    <div class="locate"><svg><use href="#mag"/></svg>Type to locate (Ctrl+K)</div>
    <span>Coordinate</span><div class="field">779696,24072</div><svg class="trk"><use href="#trk"/></svg>
    <span>Scale</span><div class="field combo"><em>1:31037197</em><i class="btn"></i></div><svg class="lock"><use href="#lock"/></svg>
    <span>Magnifier</span><div class="field spin"><em>100%</em><i class="btn"></i></div>
    <span class="rot">Rotation</span><div class="field spin"><em>0.0 °</em><i class="btn"></i></div>
    <i class="ck"></i><span>Render</span><svg><use href="#crs"/></svg><span>EPSG:5070</span><svg class="bub"><use href="#bub"/></svg>
  </footer>

  <footer class="task">
    <div class="sys">
      <b><svg viewBox="0 0 24 24"><path d="M4 6.300l7-1v6.200H4zM12 5.100l8-1.100v7.500h-8zM4 12.500h7v6.200l-7-1zM12 12.500h8V20l-8-1.100z" fill="#fff"/></svg></b>
      <b><svg viewBox="0 0 24 24"><circle cx="14" cy="9.500" r="5.300" fill="none" stroke="#fff" stroke-width="1.300"/><path d="M10 13.500L4 19.500" stroke="#fff" stroke-width="1.500"/></svg></b>
      <b><svg viewBox="0 0 24 24"><path d="M4.500 4v3h10V4M4.500 20v-3h10v3M4.500 9.500h10v5h-10zM18.500 4v16" fill="none" stroke="#fff" stroke-width="1.200"/><path d="M17 9h3v3h-3z" fill="#fff"/></svg></b>
    </div>
    <div class="apps">
      <b class="run"><svg viewBox="0 0 24 24"><path d="M2 11Q4 1.500 12.500 1.500 22 2 22 14H9q.5 4.500 6 4.500 3.500 0 6-1.500v4.500q-3 1.500-7 1.500-9 0-9.500-8Q5 9 9 7.500 4 8 2 11zM9 10h7q-.5-3.500-3.500-3.500T9 10z" fill="#0a7bdc" fill-rule="evenodd"/></svg></b>
      <b class="run many"><svg viewBox="0 0 24 24"><path d="M1 3h8l1 2h12v16H1z" fill="#fbe08e"/><path d="M1 3h8v2H1z" fill="#e9a72e"/><path d="M5 21v-7h14v7h-4v-3H9v3z" fill="#36a7dc"/></svg></b>
      <b><svg viewBox="0 0 24 24"><rect x="1" y="1" width="22" height="22" rx="2.500" fill="#7cb71b"/><path d="M3 15q-1-4 3-4 0-4 4-4 3 0 3 4 2-3 5-1 4 0 4 3t-3 3H7q-3 0-4-1z" fill="#fff"/><path d="M9 10q2 0 1 3M15 12q2-1 2 1" stroke="#7cb71b" fill="none"/></svg></b>
      <b><svg viewBox="0 0 24 24"><rect x="1" y="1" width="22" height="22" rx="2.500" fill="#3a9a33"/><path d="M6 4h8v14l-8 1zM15 5l3 1v13l-7 2" fill="none" stroke="#fff" stroke-width="1.500"/><path d="M8 7h4M8 10h4M8 13h4M8 16h4" stroke="#fff" stroke-width="1.500"/></svg></b>
      <b><svg viewBox="0 0 24 24"><circle cx="12" cy="12.500" r="10.500" fill="#ee3543"/><path d="M13 1.500q11 3 9.500 12-1 9-10.500 9.500 6-5 4-12z" fill="#ffcb36"/><path d="M2 10q1-5 3-6 2 3 6 2l6 6q1 7-6 8-8 0-9-10z" fill="#ff8528"/><path d="M10 4q8 1 8 8t-7 6q-5-1-5-5l5 1 2-2-4-3z" fill="#274ed0"/></svg></b>
      <b><svg viewBox="0 0 24 24"><path d="M4 1h12l4 4v18H4z" fill="#f3f3f3"/><path d="M16 1v4h4z" fill="#aaa"/></svg></b>
      <b class="run"><svg viewBox="0 0 24 24"><rect x="1.500" y="1.500" width="21" height="18" fill="#092b38" stroke="#506f7b" stroke-width="1.300"/><path d="M17 6H7.500v9H17M8 10.500h9" fill="none" stroke="#dfe7d9" stroke-width="1.500"/><path d="M7 22.500h10" stroke="#17455a" stroke-width="1.500"/></svg></b>
      <b><svg viewBox="0 0 24 24"><circle cx="12" cy="12" r="10.700" fill="#6d3598" stroke="#d8d0df" stroke-width="1.600"/><path d="M6 6.500l3 1.700h6l3-1.700.5 6q.5 5-6.500 5t-6.500-5z" fill="#fff"/><rect x="7.500" y="11" width="9" height="4.500" rx="2" fill="#e2d5ea"/></svg></b>
      <b><svg viewBox="0 0 24 24"><path d="M12 5h11v14H12z" fill="#fff" stroke="#0a7b68" stroke-width="1.500"/><path d="M14 8h6M14 11h6M14 14h6" stroke="#0a7b68" stroke-width="1.500"/><path d="M0 3l14-2v22L0 21z" fill="#077967"/><path d="M5 17V8h3.500q2.500 0 2.500 2.500T8.500 13H5" fill="none" stroke="#fff" stroke-width="1.800"/></svg></b>
      <b class="run"><svg viewBox="0 0 24 24"><path d="M1 7.500L3.500 6 17.500 16.500V22z" fill="#1683c7"/><path d="M1 16.500L3.500 18 17.500 7.500V1z" fill="#1977b8"/><path d="M17 0l6.500 3v18L17 24z" fill="#259ee2"/></svg></b>
      <b class="run"><svg viewBox="0 0 24 24"><circle cx="8" cy="8" r="7" fill="#0aa4e7"/><circle cx="16" cy="16" r="7" fill="#0698dc"/><circle cx="12" cy="12" r="9.500" fill="#08a2e8"/><path d="M16 8q-3-2.500-6-1-2.500 3 1 4.500l3 1q3 2 0 4-3 1.500-6.500-.8" fill="none" stroke="#fff" stroke-width="2.500"/></svg></b>
      <b class="run"><svg viewBox="0 0 24 24"><circle cx="12" cy="12" r="11" fill="#fbd13a"/><path d="M12 12L2.500 6.500A11 11 0 0 1 21.500 6.500H12z" fill="#df4335"/><path d="M2.500 6.500A11 11 0 0 0 11 23l5-9-8 0z" fill="#2da150"/><circle cx="12" cy="12" r="5.200" fill="#fff"/><circle cx="12" cy="12" r="4.200" fill="#4685ec"/></svg></b>
      <b class="run"><svg viewBox="0 0 24 24"><circle cx="12" cy="12" r="11.500" fill="#1fadf4"/><path d="M5 6.500h14q-1 3.500-5 3.500H9q-3.500 0-4-3.500zM7.500 11.500h8q-1 3-4 3-3 0-4-3zM10 16h3.500q-1 3.500-2.500 3.500z" fill="#fff"/></svg></b>
      <b class="run active"><svg viewBox="0 0 24 24"><circle cx="12" cy="12" r="8.700" fill="none" stroke="#87ae37" stroke-width="5"/><path d="M12 12l9 9" stroke="#4c4d34" stroke-width="7"/><path d="M12 10l4 1 7 8v4h-4l-7-8z" fill="#76b744"/><path d="M10.500 9.500l5.500 1.500-3 4z" fill="#f5b36a"/></svg></b>
      <b class="run"><svg viewBox="0 0 24 24"><path d="M1 15Q1 6 12 5q8 0 7 6-1 3-4 4t-1 4q-1 3-7 1-6-2-6-5z" fill="#d4e5f0"/><circle cx="5" cy="13" r="2" fill="#d54c37"/><circle cx="9" cy="9" r="2" fill="#e6a333"/><circle cx="14" cy="9" r="2" fill="#6ba84c"/><circle cx="7" cy="17" r="2" fill="#4977bc"/><path d="M12 23l6-15 3-7 2.500 1-2.500 8-7 13z" fill="#c4773e" stroke="#e9cba2" stroke-width=".6"/></svg></b>
    </div>
    <div class="tray">
      <svg class="ppl" viewBox="0 0 16 16"><g fill="none" stroke="#fff" stroke-width="1.200"><circle cx="5.500" cy="7.500" r="2.500"/><path d="M1.500 15q0-5 4-5t4 5"/><circle cx="11" cy="3.500" r="2.500"/><path d="M9 7q5-2 6 4"/></g></svg>
      <svg class="chev" viewBox="0 0 14 14"><path d="M1.500 9.800L7 4.300l5.500 5.500" fill="none" stroke="#fff" stroke-width="1.300"/></svg>
      <svg class="bat" viewBox="0 0 16 14"><path d="M.6 3.600h12.500v7H.6zM14.500 5.500v3" fill="none" stroke="#fff" stroke-width="1.200"/><path d="M2.500 5.500h4v3.500h-4z" fill="#fff"/></svg>
      <svg class="spk" viewBox="0 0 16 14"><path d="M1 5h2.500L7 1.500v11L3.500 9H1zM9.500 5l4 4M13.500 5l-4 4" fill="none" stroke="#fff" stroke-width="1.100"/></svg>
      <div class="time"><div>16.36</div><div>25.6.2019</div></div>
      <div class="notif"><svg viewBox="0 0 18 18"><path d="M1 1h16v12h-6l-4 4v-4H1z" fill="#fff"/><path d="M4 4.500h10M4 7h10M4 9.500h8" stroke="#222" stroke-width="1.100"/></svg><em>24</em></div>
      <div class="peek"></div>
    </div>
  </footer>
</div>
<script src="map.js"></script>
</body>
</html>
```
FILE: styles.css
```css
* { box-sizing: border-box; }
body { margin: 0; background: #fff; font: 12px "Open Sans", "Noto Sans", sans-serif; letter-spacing: -.28px; color: #000; }
i, em { font-style: normal; }
b { font-weight: normal; }
ul { list-style: none; margin: 0; padding: 0; }
.sprite { display: none; }
.app { width: 1366px; height: 768px; display: flex; flex-direction: column; background: #efefef; overflow: hidden; }

.title { height: 23px; flex: none; background: #fff; display: flex; align-items: center; padding-left: 2px; }
.title .i { width: 16px; height: 16px; margin-right: 5px; }
.winctl { width: 130px; height: 23px; margin-left: auto; margin-right: 6px; }

.menu { height: 20px; flex: none; padding-left: 10px; display: grid; align-items: center; grid-template-columns: 51px 34px 39px 42px 56px 53px 47px 46px 62px 38px 43px 71px auto; border-bottom: 1px solid #d4d4d4; }
.menu u { text-underline-offset: 2px; }

.bar { height: 31px; flex: none; display: flex; align-items: center; background: linear-gradient(#fafafa, #ededed); border-bottom: 1px solid #b6b6b6; }
.bar b, .tools b { width: 25px; height: 24px; flex: none; display: grid; place-items: center; }
.bar svg, .tools svg { width: 16px; height: 16px; }
.bar .on { background: #dcdcdc; width: 24px; margin-right: 1px; border: 1px solid #9c9c9c; border-radius: 3px; }
.off { opacity: .32; }
.off.gray { filter: grayscale(.8); }
.h { width: 16px; height: 16px; flex: none; background: radial-gradient(circle, #aaa 0.6px, transparent 1px) 0 0 / 3px 3px; background-clip: content-box; padding: 0 3px 0 9px; }
.h.first { width: 12px; padding: 0 3px 0 5px; }
.dd { width: 12px; height: 5px; flex: none; background: #4a4a4a; clip-path: polygon(1px 0, 9px 0, 5px 5px); }
.bar .dd { position: relative; left: 1px; }
.dd.dim { background: #999; }
.sep { width: 7px; height: 12px; flex: none; border-left: 1px solid #d0d0d0; margin-left: 3px; margin-right: -3px; }

.work { height: 595px; flex: none; display: flex; }
.dock { display: flex; flex-direction: column; }
.left { width: 294px; }
.right { width: 298px; }
.head { height: 20px; flex: none; display: flex; align-items: center; gap: 3px; padding: 0 2px 0 4px; }
.head span { margin-right: auto; padding-bottom: 2px; }
.right .head { letter-spacing: -.33px; }
.head .hb { width: 11px; height: 11px; margin-top: -1px; }
.tools { height: 30px; flex: none; display: flex; align-items: center; padding: 0 0 2px 3px; }
.tools .w18 { width: 18px; }
.tree { background: #fff; border: 1px solid #b0b0b0; }
.browser { height: 275px; display: flex; overflow: hidden; }
.browser ul { flex: 1; }
.tree li { height: 18px; display: flex; align-items: center; padding-left: 23px; position: relative; }
.tree li svg, .db2 { width: 16px; height: 16px; margin-right: 6px; }
.db2 { background: #6a98ca; border-radius: 1px; color: #e8f0f8; font: 6.5px/16px "Liberation Sans", sans-serif; letter-spacing: 0; text-align: center; }
.tree li.x::before { content: ""; position: absolute; left: 8px; top: 5px; width: 4px; height: 8px; background: #505050; clip-path: polygon(0 0, 100% 50%, 0 100%); }
.scroll { width: 14px; border-left: 1px solid #b0b0b0; display: flex; flex-direction: column; }
.scroll i { display: block; }
.scroll .up, .scroll .down { height: 13px; background: #f6f6f6; display: grid; place-items: center; }
.scroll .up { border-bottom: 1px solid #b0b0b0; }
.scroll .down { border-top: 1px solid #b0b0b0; height: 14px; }
.scroll .up::before, .scroll .down::before { content: ""; width: 7px; height: 4px; background: #505050; clip-path: polygon(0 100%, 50% 0, 100% 100%); }
.scroll .down::before { transform: scaleY(-1); }
.scroll .track { flex: 1; background: linear-gradient(90deg, #eee, #fff); }
.scroll .rest { height: 42px; background: #e0e0e0; border-top: 1px solid #b0b0b0; }
.split { height: 6px; flex: none; background: radial-gradient(circle, #aaa .6px, transparent 1px) 140px 1px / 3px 3px; clip-path: inset(1px 138px 2px 140px); }
.laytools { height: 30px; padding-bottom: 3px; }
.layers { flex: 1; }
.layer { height: 18px; display: flex; align-items: center; padding-left: 23px; font-weight: 700; letter-spacing: -.55px; }
.layer.wide { letter-spacing: -.27px; }
.alt { background: #efefef; }
.ck { width: 14px; height: 14px; background: #fff; border: 1px solid #ababab; display: grid; place-items: center; flex: none; }
.ck::before { content: ""; width: 8px; height: 9px; background: #000; clip-path: polygon(0 50%, 18% 42%, 38% 68%, 80% 0, 100% 8%, 42% 100%, 30% 100%); }
.pt { width: 5px; height: 5px; border-radius: 50%; background: #7a8c66; border: 1px solid #40484d; margin: 0 12px 0 12px; position: relative; top: -1px; }
.sw { width: 16px; height: 16px; background: #377eb8; border: 1px solid #2f6ea3; margin: 0 6px; }
.vsplit { width: 6px; height: 100%; flex: none; background: radial-gradient(circle, #aaa .6px, transparent 1px) 2px 0 / 3px 3px; clip-path: inset(290px 1px 288px 2px); }
.canvas { width: 762px; border: 1px solid #b0b0b0; background: #fff; }
.canvas svg { display: block; width: 760px; height: 593px; }
.search { height: 22px; flex: none; border: 1px solid #999; border-radius: 3px; background: #fff; display: flex; align-items: center; font: 11px "DejaVu Sans Condensed", "Noto Sans", sans-serif; letter-spacing: -.1px; padding: 0 7px 0 6px; }
.search svg { width: 16px; height: 14px; margin-right: 5px; }
.search .clr { width: 13px; height: 9px; margin: 0 0 0 auto; }
.toolbox { flex: 1; padding-top: 1px; }

.status { height: 28px; flex: none; display: grid; align-items: center; grid-template-columns: 578px 57px 86px 32px 29px 80px 33px 48px 88px 59px 84px 24px 53px 19px 60px 36px; font: 11px "DejaVu Sans Condensed", "Noto Sans", sans-serif; letter-spacing: -.28px; white-space: nowrap; }
.status > * { margin-top: 1px; }
.status svg { width: 16px; height: 16px; }
.locate { width: 200px; height: 22px; margin-left: 4px; border: 1px solid #aaa; border-radius: 3px; background: #fff; color: #777; display: flex; align-items: center; padding-left: 6px; letter-spacing: -.05px; }
.locate svg { margin-right: 5px; }
.field { height: 21px; background: #fff; border: 1px solid #aaa; border-radius: 3px; display: flex; align-items: center; padding-left: 6px; overflow: hidden; letter-spacing: -.15px; }
.field em { flex: 1; }
.combo { padding-left: 0; }
.combo em { margin-left: -3px; }
.combo .btn { width: 20px; height: 100%; flex: none; border-left: 1px solid #aaa; background: #f4f4f4; display: grid; place-items: center; }
.combo .btn::before { content: ""; width: 8px; height: 4px; background: #555; clip-path: polygon(0 0, 100% 0, 50% 100%); }
.spin { padding-left: 4px; }
.spin .btn { width: 14px; height: 100%; border-left: 1px solid #aaa; background: #f4f4f4; display: grid; place-items: center; }
.spin .btn::before { content: ""; width: 7px; height: 12px; background: #555; clip-path: polygon(0 4px, 50% 0, 100% 4px, 0 4px, 0 8px, 100% 8px, 50% 100%, 0 8px); }
.status .trk { margin-left: 4px; margin-top: -1px; }
.status .lock { width: 14px; margin-left: 12px; }
.rot { padding-left: 8px; }
.status .ck { margin-left: 6px; }
.status .bub { margin-left: 13px; }

.task { height: 40px; flex: none; display: flex; background: linear-gradient(90deg, #0c1110 0, #12170c 10%, #202308 22%, #252506 35%, #232404 60%, #211d08 80%, #17140a 100%); color: #fff; }
.sys, .apps { display: flex; }
.sys { padding-right: 3px; }
.sys b { width: 48px; display: grid; place-items: center; }
.apps b { width: 49px; display: grid; place-items: center; position: relative; padding-right: 2px; }
.task b svg { width: 24px; height: 24px; }
.apps .run::after { content: ""; position: absolute; left: 4px; right: 5px; bottom: 0; height: 2px; background: #76b9ed; }
.apps .many::after { background: linear-gradient(90deg, #76b9ed 31px, #5582a5 31px); }
.apps .active { background: #4c4d34; }
.apps .active::after { left: 0; right: 0; }
.tray { margin-left: auto; display: flex; align-items: center; }
.ppl { width: 16px; height: 16px; margin-right: 21px; }
.chev { width: 14px; height: 14px; margin-right: 11px; }
.bat { width: 16px; height: 14px; margin-right: 7px; }
.spk { width: 16px; height: 14px; margin-right: 9px; }
.time { width: 50px; text-align: center; line-height: 18px; margin-right: 16px; white-space: nowrap; letter-spacing: -.5px; }
.notif { width: 37px; height: 40px; position: relative; }
.notif svg { position: absolute; left: 0; top: 11px; width: 18px; height: 18px; }
.notif em { position: absolute; left: 6px; top: 19px; width: 20px; height: 16px; line-height: 14px; border-radius: 8px; background: #3c3c38; border: 1px solid #82827c; text-align: center; font-size: 11px; font-weight: 600; }
.peek { width: 5px; height: 40px; border-left: 1px solid #66655c; }
```
FILE: map.js
```js
// Base layer outline, state borders and graduated power plant symbols.
const land = [[426,237],[432,242],[437,244],[441,239],[445,235],[460,236],[473,240],[502,249],[543,257],[575,262],[612,266],[645,268],[692,269],[692,263],[695,265],[696,272],[707,274],[720,278],[730,279],[744,281],[738,286],[731,291],[723,298],[735,294],[750,291],[755,287],[762,286],[755,293],[765,297],[775,296],[787,293],[796,300],[802,302],[788,304],[780,307],[772,313],[765,328],[769,337],[771,360],[775,361],[778,350],[777,330],[778,318],[787,306],[797,307],[804,313],[807,323],[803,330],[812,328],[822,343],[818,357],[830,357],[840,350],[847,343],[845,336],[867,327],[876,317],[880,307],[890,300],[903,298],[920,288],[924,280],[924,267],[928,255],[932,257],[937,253],[945,258],[948,272],[959,283],[948,293],[938,300],[932,309],[936,322],[942,330],[944,338],[936,341],[920,350],[910,362],[907,373],[903,385],[900,405],[904,418],[908,431],[898,442],[887,455],[870,470],[857,483],[853,497],[857,513],[870,533],[880,545],[885,560],[884,575],[874,580],[864,568],[850,560],[841,549],[840,530],[832,523],[825,518],[813,525],[805,518],[797,517],[777,520],[765,521],[760,524],[767,535],[757,534],[748,538],[740,537],[735,532],[713,532],[700,533],[692,543],[680,552],[672,555],[667,565],[670,581],[655,579],[645,572],[640,558],[633,544],[628,537],[620,529],[607,528],[603,531],[599,538],[585,529],[580,513],[572,504],[565,497],[545,495],[544,500],[513,497],[495,487],[472,473],[447,468],[436,455],[424,447],[413,433],[409,410],[403,390],[398,370],[397,345],[401,335],[404,322],[405,312],[417,290],[423,270],[425,250]];
const islands = ["M733 283l12-10 9-4-8 8-10 6z", "M746 282l7-5-5 7z", "M385 106h19v13l9 6 3 6-3 7-7 5-3-1-1-8-6 2-2 4-6-1-3-12z", "M380 106h5l-2 8z", "M414 437l5 3M420 449l1 2M430 456l2 4", "M857 588l6-2 12-6", "M776 312l4-4M783 302l5-3"];
const borders = ["M490 287l-30-2-35-9","M502 250l-12 37 2 5-12 28-4 20","M502 249l1 23 10 13-4 13 6 2 6 16 18-1","M406 323l70 18 29 6 28 6","M445 333l-10 39 37 53 6 16","M504 347l-15 78-6 15","M540 312l67 8","M539 312l-7 53 70 8","M612 266l-7 82-3 25","M608 307l70 4","M605 347l73 4","M552 368l-18 130","M495 414l55 9 58 6 72 3 75 0 85-6","M602 373l21 2-4 55","M622 389l67 3","M608 429l-4 68-34-3","M608 436l32 2v27l23 10 34 4","M676 270l2 41 7 60 4 22 2 40 6 45 2 44","M678 351l55 0 38-3","M725 297l-6 25 14 25-2 38-8 10 12 30-11 40-11 30 10 38","M733 300l35 9","M684 393l45-3 16 17-8 25","M750 350l2 60","M771 360l2 60M793 360l2 52M818 357l-9 30 4 25","M728 439l70-5 50-7 54-10","M731 461l60-4 45-6","M770 457l2 60M806 454l12 46M772 510l75-3","M833 423l15-18 18-3 10-18 25-4M847 350l30 3 24 7M880 307l6 48","M905 298l-2 50M923 285l11 22","M701 485h40v15h20"];
const big = [[476,258,19],[493,248,4.5],[584,306,6.5],[630,290,3.6],[637,289,3.6],[634,294,3],[556,359,6.5],[595,358,5.5],[513,383,6],[519,420,7],[528,389,5],[566,377,4.7],[632,375,4.7],[538,458,5.500],[550,428,5],[495,464,11],[493,463,4],[413,421,7],[440,402,4],[428,440,5],[526,448,3.5],[504,264,3],[509,259,2.600],[539,357,3],[593,411,4.5],[505,448,3],[706,292,4.3],[850,333,7.5],[776,333,7],[765,329,4],[766,348,4.500],[748,341,4],[819,344,5.5],[816,356,6],[812,357,6],[833,355,4.7],[777,357,6],[763,347,4],[683,401,6.5],[694,398,4.5],[676,450,5],[685,463,4.5],[733,365,4],[740,408,8],[751,412,6],[768,408,8],[776,415,6.5],[780,424,7],[796,405,6.5],[804,413,5.500],[813,401,5],[823,401,5],[831,392,7],[840,398,7],[834,394,6],[855,401,9],[838,372,6],[846,380,6],[830,379,5.5],[829,387,5.5],[868,387,4.5],[860,384,5],[832,413,4],[774,437,8],[788,437,5.5],[807,444,8],[801,450,7],[782,457,9.5],[784,473,8.500],[806,456,5],[798,480,5],[807,473,5],[714,455,6.5],[734,450,5.500],[722,482,6.5],[741,498,5.500],[722,508,5.5],[738,469,3.5],[754,459,4],[759,459,4],[752,466,4],[758,480,4],[770,474,4],[699,497,7],[677,490,6.500],[664,496,7],[668,512,5.500],[675,527,6],[684,543,8],[688,530,7],[683,536,5],[673,529,5],[685,519,4],[711,525,6],[751,526,6],[771,517,6],[776,510,6],[738,516,5],[884,454,6],[863,465,6],[871,465,4.5],[840,489,5.5],[842,529,7],[848,549,7],[857,558,7.500],[871,549,10],[874,555,11.5],[877,573,8.5],[864,541,5],[777,488,5],[809,483,5],[827,450,5],[841,457,4],[820,472,5],[822,480,5],[813,502,5],[790,487,5.5],[896,336,6],[886,302,4],[885,300,4],[932,308,3.7],[889,334,5],[876,355,4],[611,390,4],[696,317,5],[671,434,4],[723,320,3]];
// [cx, cy, rx, ry, count, largest radius]
const groups = [[448,238,7,4,9,2.5],[452,244,10,7,13,2.5],[447,260,7,9,22,2.3],[434,264,7,12,24,3],[441,280,14,10,34,3],[447,284,8,5,15,5],[458,284,14,5,42,4],[466,267,6,9,9,3],[487,275,8,9,28,2.6],[478,281,10,4,15,4],[472,277,8,5,12,3.5],[510,262,8,5,6,3],[431,295,9,9,26,2.300],[442,300,3,6,9,2.2],[427,312,5,5,8,2.3],[427,325,10,10,18,2.6],[421,342,11,8,40,2.600],[402,342,4,9,18,2.2],[485,302,6,5,16,3.5],[480,315,4,6,22,2.6],[488,327,7,7,30,2.6],[501,337,8,4,30,2.600],[530,328,7,10,18,2.6],[520,340,7,3,13,2.6],[418,370,14,17,95,2.5],[422,395,14,16,135,2.6],[432,420,12,18,130,2.8],[447,444,15,14,130,3],[457,464,16,5,42,2.4],[439,368,20,8,26,2.2],[449,405,4,14,14,2.3],[480,422,6,7,34,3],[483,438,6,4,10,3],[471,457,5,3,10,3],[500,465,14,7,60,3.2],[514,480,5,6,14,2.2],[524,358,3,14,22,2.6],[523,375,4,5,12,4],[506,400,8,12,26,2.3],[546,354,14,5,7,2.5],[583,356,7,9,14,2.4],[592,384,6,12,60,2.6],[587,350,5,4,12,2.4],[608,375,13,4,18,2.4],[562,392,16,5,16,2.3],[561,405,5,3,12,2.3],[594,408,4,5,15,2.6],[578,422,3,8,12,2.2],[560,412,3,10,9,2.300],[566,452,3,8,20,2.2],[565,494,5,4,15,2.4],[552,482,10,4,9,2.3],[465,365,24,14,11,2.2],[560,298,42,28,38,2.3],[565,330,35,24,10,2.3],[634,293,7,4,15,3],[654,315,45,34,75,2.6],[648,360,34,25,65,2.3],[647,407,25,27,90,2.5],[638,424,18,9,32,2.4],[625,450,7,7,35,2.4],[627,476,9,5,25,2.7],[635,494,22,8,55,3],[607,473,8,22,18,2.3],[652,456,16,12,42,2.7],[672,432,14,26,65,2.500],[658,532,5,9,40,2.9],[640,542,12,9,6,2.4],[658,574,11,3,16,2.6],[667,559,4,7,20,3.5],[660,505,14,20,45,4],[677,498,14,22,55,4.5],[688,534,11,9,38,4],[685,465,22,25,45,3.4],[702,350,24,38,145,2.5],[707,312,20,16,45,2.4],[707,325,14,8,45,2.6],[735,350,25,28,50,2.5],[744,318,4,8,18,2.3],[752,350,14,38,55,3.2],[710,375,22,28,70,2.7],[690,403,22,16,45,3],[745,390,22,22,65,3],[768,380,12,26,80,3.2],[798,335,8,10,30,3],[805,350,14,16,65,3],[783,340,7,26,40,3],[790,380,16,20,45,3],[760,320,6,12,26,2.5],[765,301,38,8,24,2.4],[798,308,8,8,10,2.3],[815,390,22,22,55,3.2],[792,409,22,12,25,4],[760,412,28,10,30,4],[710,420,32,22,60,2.8],[692,442,9,12,25,3],[727,465,35,30,36,3.2],[702,498,8,8,12,4],[713,525,16,5,28,3.5],[740,524,16,7,38,3.3],[698,532,8,5,14,3],[756,450,15,12,20,3.2],[760,506,8,10,14,2.600],[789,460,28,25,38,4],[820,462,20,20,75,3.4],[834,482,18,19,70,3],[809,503,6,6,12,3.5],[795,492,30,18,20,3.2],[820,510,28,14,18,3.2],[855,447,22,19,150,2.6],[880,431,20,18,165,2.5],[850,424,18,18,50,2.5],[889,400,10,20,75,2.6],[878,375,20,22,65,2.8],[857,390,22,18,35,2.8],[839,372,16,18,32,3.5],[897,365,14,25,160,2.5],[904,340,18,20,110,2.6],[924,330,17,18,130,2.5],[913,310,22,15,75,2.4],[892,300,12,8,38,2.500],[884,307,6,8,18,2.500],[874,325,13,8,34,3],[880,348,18,10,16,3],[939,289,14,15,34,2.3],[941,264,7,15,12,2.2],[930,300,15,12,25,2.4],[853,335,10,9,18,2.6],[725,287,12,5,9,2.4],[850,540,9,14,40,3.8],[864,532,7,9,35,3],[875,560,9,14,12,3],[852,508,5,16,20,3],[395,123,10,14,12,2.2],[404,131,3,4,6,2],[655,380,70,55,80,2.2],[790,430,90,65,75,2.5],[700,440,60,70,90,2.4]];
const singles = [[500,251,2],[612,281,2.2],[539,261,3],[588,277,2],[652,269,2],[603,291,2],[593,299,2],[467,304,2],[446,317,2],[492,309,2],[707,274,2],[723,282,2],[937,254,2],[941,260,2],[959,282,2],[954,280,2],[862,586,2],[870,583,2],[908,432,2],[903,434,2],[586,529,2],[665,581,2],[493,364,2],[461,357,2],[470,355,3],[482,350,2],[461,390,2],[521,405,2],[508,417,2],[531,424,2],[506,438,2],[513,495,2],[520,494,2],[528,498,2],[591,436,2],[584,445,2],[571,481,2],[557,477,2],[598,514,2],[617,512,2],[600,500,2],[942,338,2],[945,339,2],[784,308,2],[543,410,2],[500,449,2],[472,415,2]];
let seed = 20160;
const rnd = () => (seed = (seed * 1664525 + 1013904223) >>> 0) / 4294967296;
const inside = (x, y) => {
  let hit = false;
  for (let a = 0, b = land.length - 1; a < land.length; b = a++) {
    const [ax, ay] = land[a], [bx, by] = land[b];
    if ((ay > y) !== (by > y) && x < (bx - ax) * (y - ay) / (by - ay) + ax) hit = !hit;
  }
  return hit;
};
const dot = ([x, y, r]) => `<circle cx="${x.toFixed(1)}" cy="${y.toFixed(1)}" r="${r.toFixed(1)}"/>`;
const dots = [];
for (const [cx, cy, rx, ry, n, max] of groups) {
  for (let k = 0; k < n; k++) {
    const t = rnd() * Math.PI * 2, d = Math.sqrt(rnd()) * 1.15;
    const x = cx + Math.cos(t) * rx * d, y = cy + Math.sin(t) * ry * d;
    const r = rnd() < .85 ? 1.95 : 1.95 + rnd() * (max - 1.95) * 1.15;
    if (inside(x, y) || (y < 143 && x > 384 && x < 413 && y > 106)) dots.push([x, y, r]);
  }
}
const rank = new Map(dots.map(d => [d, rnd()]));
const under = dots.filter(d => rank.get(d) < .72);
const over = dots.filter(d => rank.get(d) >= .72 && !(Math.hypot(d[0] - 476, d[1] - 258) < 19 && d[1] < 262));
const core = big.filter(([, , r]) => r > 5.5 && r < 12).map(([x, y, r]) => [x - r * .15, y + r * .1, 1.9]);
document.getElementById("map-view").innerHTML =
  `<g fill="#377eb8" stroke="#2f6c9e" stroke-width=".7"><path d="M${land.map(p => p.join(" ")).join("L")}Z"/>` +
  islands.map(d => `<path d="${d}"/>`).join("") + `</g>` +
  `<g fill="none" stroke="#28597f" stroke-width=".8">${borders.map(d => `<path d="${d}"/>`).join("")}</g>` +
  `<g fill="#e4b437" stroke="#35301c" stroke-width=".9">` +
  [...under, ...big, ...over, ...singles, ...core.filter((c, k) => k % 3 === 0)].map(dot).join("") + `</g>` +
  `<circle cx="1055" cy="630" r="1" fill="#555"/>`;
```
